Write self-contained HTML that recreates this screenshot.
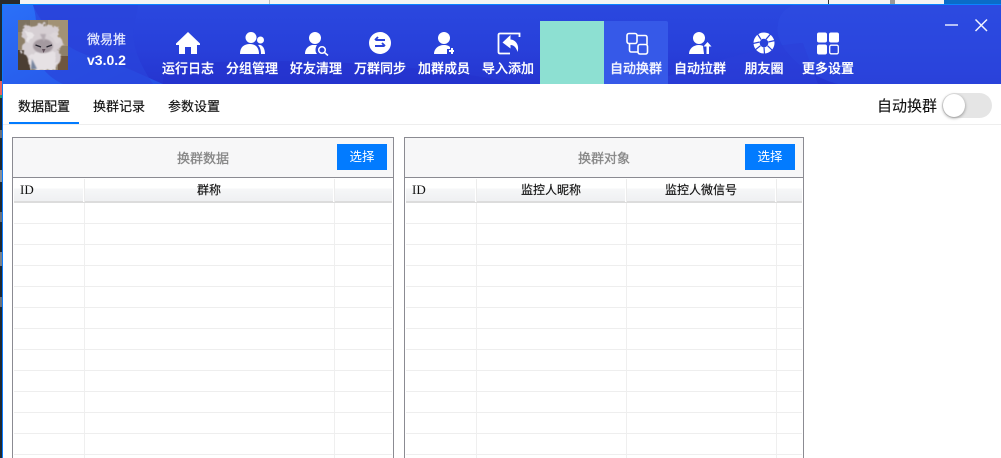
<!DOCTYPE html>
<html lang="zh">
<head>
<meta charset="utf-8">
<title>微易推</title>
<style>
*{box-sizing:border-box;margin:0;padding:0}
html,body{width:1001px;height:458px;overflow:hidden;background:#fff;font-family:"Liberation Sans","Noto Sans CJK SC",sans-serif;color:#111}
#root{position:relative;width:1001px;height:458px;overflow:hidden;background:#fff}
.abs{position:absolute}
#hdr{position:absolute;left:3px;top:5px;width:998px;height:79px;overflow:hidden;background:linear-gradient(180deg,#2a48df 0%,#2840da 55%,#2535d0 100%)}
#hdr svg.bg{position:absolute;left:0;top:0}
.nav{position:absolute;top:21px;width:64px;height:63px;color:#fff;text-align:center}
.nav svg{position:absolute;left:0;top:0}
.nav span{position:absolute;left:0;width:64px;top:39px;font-size:13px;line-height:18px;font-weight:500;white-space:nowrap;-webkit-text-stroke:.2px #fff}
.tab{position:absolute;top:97px;font-size:13px;line-height:20px;color:#111;white-space:nowrap;-webkit-text-stroke:.15px #111}
.panel{position:absolute;top:137px;height:321px;border:1px solid #8b8b92;border-bottom:0;background:#fff;overflow:hidden}
.phead{position:absolute;left:0;right:0;top:0;height:40px;background:#f7f7f8;border-bottom:1px solid #8b8b92}
.ptitle{position:absolute;top:11px;font-size:13px;line-height:20px;color:#888;text-align:center;-webkit-text-stroke:.35px #888}
.btn{position:absolute;top:6px;width:50px;height:26px;background:#027bff;color:#fff;font-size:12.5px;line-height:27px;text-align:center}
.thead{position:absolute;left:1px;top:41px;height:24px;background:linear-gradient(180deg,#fff 0,#fff 42%,#f6f7f8 44%,#eff0f2 100%);border-bottom:2px solid #dcdcdc}
.th{position:absolute;top:42px;height:20px;font-size:12px;line-height:20px;color:#111;text-align:center;white-space:nowrap;-webkit-text-stroke:.15px #111}
.id{font-family:"Liberation Serif",serif;font-size:13px;-webkit-text-stroke:0}
.sep{position:absolute;top:41px;width:2px;height:23px;background:#ececec;border-left:1px solid #fff}
.hl{position:absolute;height:1px;background:#eeeeee}
.vl{position:absolute;width:1px;top:65px;height:256px;background:#efefef}
</style>
</head>
<body>
<div id="root">
<!-- behind-window strip -->
<div class="abs" style="left:0;top:0;width:1001px;height:4px;background:#f3f3f3"></div>
<div class="abs" style="left:0;top:0;width:20px;height:4px;background:#2a2a2a"></div>
<div class="abs" style="left:269px;top:0;width:1px;height:4px;background:#bbb"></div>
<div class="abs" style="left:828px;top:0;width:1px;height:4px;background:#333"></div>
<div class="abs" style="left:890px;top:0;width:5px;height:4px;background:#999"></div>
<div class="abs" style="left:944px;top:0;width:57px;height:4px;background:#0a6cc8"></div>
<div class="abs" style="left:0;top:4px;width:2px;height:454px;background:#1f2a33"></div>
<div class="abs" style="left:0;top:81px;width:2px;height:14px;background:#e8605c"></div>
<div class="abs" style="left:0;top:95px;width:2px;height:3px;background:#2a9a6a"></div>
<div class="abs" style="left:0;top:130px;width:2px;height:8px;background:#6a7078"></div>
<div class="abs" style="left:0;top:170px;width:2px;height:12px;background:#8a8f95"></div>
<div class="abs" style="left:0;top:212px;width:2px;height:10px;background:#6a7078"></div>
<div class="abs" style="left:0;top:252px;width:2px;height:14px;background:#7a8087"></div>
<div class="abs" style="left:0;top:297px;width:2px;height:10px;background:#6a7078"></div>
<!-- window border -->
<div class="abs" style="left:2px;top:4px;width:999px;height:1px;background:#0a84ff"></div>
<div class="abs" style="left:2px;top:4px;width:1px;height:454px;background:#0a7bff"></div>

<div id="hdr">
<svg class="bg" width="998" height="79" viewBox="0 0 998 79">
<defs><linearGradient id="g1" x1="0" y1="0" x2="1" y2="1"><stop offset="0" stop-color="#2a70f8"/><stop offset="1" stop-color="#2650e4"/></linearGradient></defs>
<path d="M0 0H30C38 20 60 44 90 52C120 60 130 66 160 79H0Z" fill="url(#g1)"/>
<path d="M30 0H135C133 20 120 34 150 79H60C20 60 40 30 30 0Z" fill="#2944dc" opacity=".7"/>
<path d="M160 60C300 50 420 60 520 79H160Z" fill="#2431cc" opacity=".55"/>
<path d="M700 0H998V79H835C800 70 770 40 775 20C776 10 780 5 790 0Z" fill="#2e4ce2" opacity=".55"/>
<path d="M640 79C700 60 760 40 800 38L815 79Z" fill="#2c40d8" opacity=".6"/>
</svg>
</div>

<!-- avatar -->
<svg class="abs" style="left:18px;top:20px" width="50" height="50" viewBox="0 0 50 50">
<defs>
<filter id="fur" x="-15%" y="-15%" width="130%" height="130%"><feTurbulence type="fractalNoise" baseFrequency=".22" numOctaves="2" seed="4"/><feDisplacementMap in="SourceGraphic" scale="7" xChannelSelector="R" yChannelSelector="G"/><feGaussianBlur stdDeviation=".45"/></filter>
<filter id="b"><feGaussianBlur stdDeviation=".8"/></filter>
<clipPath id="c"><rect width="50" height="50"/></clipPath></defs>
<g clip-path="url(#c)">
<rect width="50" height="50" fill="#8e8069"/>
<rect x="30" width="20" height="26" fill="#a29275"/>
<rect y="0" width="12" height="12" fill="#7d7260"/>
<rect y="30" width="12" height="20" fill="#4b3e33"/>
<rect x="40" y="36" width="10" height="14" fill="#6e5640"/>
<g filter="url(#fur)">
<path d="M7 4L15 8L23 3L33 6L41 7L39 15L45 24L40 30L44 38L37 50H13L10 38L3 30L7 20L3 12Z" fill="#d6cfd3"/>
<path d="M12 34L38 32L38 50H14Z" fill="#e6e1e4"/>
<path d="M6 8L17 15L11 24Z" fill="#e9e5e7"/>
<path d="M40 10L32 15L41 24Z" fill="#dcd6d9"/>
</g>
<g filter="url(#b)">
<ellipse cx="25" cy="26" rx="10" ry="7" fill="#a49aa0"/>
<path d="M14 39L19 49H13Z" fill="#75839c"/>
<path d="M22 14L28 14L26 22Z" fill="#b5acb2"/>
</g>
<path d="M17.500 25L23 27M34 25L28.500 27" stroke="#26242e" stroke-width="1.300"/>
<path d="M24 29L25.500 33L27.500 29Z" fill="#5f4f5a"/>
</g>
</svg>
<div class="abs" style="left:87px;top:31px;font-size:13px;line-height:18px;color:#e8ecff;white-space:nowrap;-webkit-text-stroke:.2px #e8ecff">微易推</div>
<div class="abs" style="left:87px;top:51px;font-size:14px;line-height:18px;color:#fff;font-weight:bold;white-space:nowrap">v3.0.2</div>

<!-- nav -->
<div class="nav" style="left:156px"><svg width="64" height="40"><path d="M32 11L20 22.500V24H23V33H29V26H35V33H41V24H44V22.500Z" fill="#fff"/></svg><span>运行日志</span></div>
<div class="nav" style="left:220px"><svg width="64" height="40"><circle cx="31" cy="16.500" r="5.500" fill="#fff"/><path d="M20 33C20 26 24 23 30 23C36 23 39 27 39 33Z" fill="#fff"/><circle cx="40.500" cy="19" r="3.500" fill="#fff"/><path d="M38 24C42 23 45 27 45 33H41C41 29 40 26 38 24Z" fill="#fff"/></svg><span>分组管理</span></div>
<div class="nav" style="left:284px"><svg width="64" height="40"><circle cx="31" cy="17" r="6" fill="#fff"/><path d="M21 33C21 28 24 25 28 24L33 24C31 27 31 31 33 33Z" fill="#fff"/><circle cx="38" cy="29" r="3.300" fill="none" stroke="#fff" stroke-width="1.500"/><path d="M40.500 31.500L44 34.500" stroke="#fff" stroke-width="1.500"/></svg><span>好友清理</span></div>
<div class="nav" style="left:348px"><svg width="64" height="40"><circle cx="32" cy="22" r="11" fill="#fff"/><path d="M37 19H27.500M30 16L27 19M27 25H36.500M34 22L37 25" stroke="#2a42da" stroke-width="1.900" fill="none"/></svg><span>万群同步</span></div>
<div class="nav" style="left:412px"><svg width="64" height="40"><circle cx="32" cy="17" r="6" fill="#fff"/><path d="M22 33C22 28 26 24 32 24C35 24 37 25 38 26V28H35V33Z" fill="#fff"/><path d="M40 27V33M37 30H42" stroke="#fff" stroke-width="2"/></svg><span>加群成员</span></div>
<div class="nav" style="left:476px"><svg width="64" height="40"><path d="M43.500 16V12.500H24C23 12.500 22.500 13 22.500 14V31C22.500 32 23 32.500 24 32.500H34" fill="none" stroke="#fff" stroke-width="1.800"/><path d="M34.500 14L26.500 21.500L34.500 27.500V24C38 24 40.500 27 41.500 31C43.500 25 40.500 19 34.500 18.500Z" fill="#fff"/></svg><span>导入添加</span></div>
<div class="abs" style="left:540px;top:21px;width:64px;height:63px;background:#8de0d2"></div>
<div class="nav" style="left:604px;background:#3659e8;border-top-right-radius:2px"><svg width="64" height="40" fill="none" stroke="#fff" stroke-width="1.600"><rect x="23" y="12.500" width="10" height="10" rx="2"/><rect x="34" y="23.500" width="9.500" height="9.500" rx="2"/><path d="M33 14.500H41C42.500 14.500 43 15 43 16.500V23.500M25.500 22.500V29C25.500 30.500 26 31 27.500 31H34"/></svg><span style="color:#f0f2ff">自动换群</span></div>
<div class="nav" style="left:668px"><svg width="64" height="40"><circle cx="31" cy="17" r="6" fill="#fff"/><path d="M21 33C21 28 25 24 31 24C33 24 34.500 24.500 35 25L36 33Z" fill="#fff"/><path d="M38.500 33V25.500H35.500L39.500 21L43.500 25.500H41V33Z" fill="#fff"/></svg><span>自动拉群</span></div>
<div class="nav" style="left:732px"><svg width="64" height="40"><circle cx="32" cy="22" r="10.500" fill="#fff"/><circle cx="32" cy="22" r="4.300" fill="#2a42da"/><g stroke="#2a42da" stroke-width="1.200"><path d="M34 18.300L39 12.500"/><path d="M36.300 21L43 19.500"/><path d="M35.500 24.700L40.500 29.500"/><path d="M32 26.300L32.500 33"/><path d="M28.500 24.700L23 29"/><path d="M27.700 21L21 22.500"/><path d="M29 18.500L25.500 13"/></g></svg><span>朋友圈</span></div>
<div class="nav" style="left:796px"><svg width="64" height="40"><rect x="21" y="11.500" width="10" height="10" rx="2" fill="#fff"/><rect x="33" y="11.500" width="10" height="10" rx="2" fill="#fff"/><rect x="21" y="23.500" width="10" height="10" rx="2" fill="#fff"/><rect x="33.700" y="24.200" width="8.600" height="8.600" rx="1.500" fill="none" stroke="#fff" stroke-width="1.300"/></svg><span>更多设置</span></div>

<!-- window controls -->
<svg class="abs" style="left:940px;top:14px" width="55" height="22"><path d="M5 11H18" stroke="#f2f4ff" stroke-width="1.400"/><path d="M35.500 5.500L47 17M47 5.500L35.500 17" stroke="#f2f4ff" stroke-width="1.500"/></svg>

<!-- tabs -->
<div class="tab" style="left:18px">数据配置</div>
<div class="tab" style="left:93px">换群记录</div>
<div class="tab" style="left:168px">参数设置</div>
<div class="abs" style="left:3px;top:124px;width:998px;height:1px;background:#eeeeee"></div>
<div class="abs" style="left:9px;top:122px;width:70px;height:2px;background:#027bff"></div>
<div class="abs" style="left:877px;top:97px;font-size:15px;line-height:20px;color:#111;white-space:nowrap;-webkit-text-stroke:.1px #111">自动换群</div>
<div class="abs" style="left:942px;top:93px;width:50px;height:25px;border-radius:13px;background:#e5e5e5"></div>
<div class="abs" style="left:943px;top:94px;width:22px;height:23px;border-radius:50%;background:#fff;box-shadow:0 1px 3px rgba(0,0,0,.4)"></div>

<!-- left panel -->
<div class="panel" style="left:12px;width:382px">
  <div class="phead"></div>
  <div class="ptitle" style="left:0;width:380px">换群数据</div>
  <div class="btn" style="left:324px">选择</div>
  <div class="thead" style="width:378px"></div>
  <div class="th id" style="left:7px">ID</div>
  <div class="th" style="left:71px;width:250px">群称</div>
  <div class="sep" style="left:70px"></div>
  <div class="sep" style="left:320px"></div>
  <div class="vl" style="left:71px"></div>
  <div class="vl" style="left:321px"></div>
  <div class="hl" style="left:1px;width:378px;top:85px"></div>
  <div class="hl" style="left:1px;width:378px;top:106px"></div>
  <div class="hl" style="left:1px;width:378px;top:127px"></div>
  <div class="hl" style="left:1px;width:378px;top:148px"></div>
  <div class="hl" style="left:1px;width:378px;top:169px"></div>
  <div class="hl" style="left:1px;width:378px;top:190px"></div>
  <div class="hl" style="left:1px;width:378px;top:211px"></div>
  <div class="hl" style="left:1px;width:378px;top:232px"></div>
  <div class="hl" style="left:1px;width:378px;top:253px"></div>
  <div class="hl" style="left:1px;width:378px;top:274px"></div>
  <div class="hl" style="left:1px;width:378px;top:295px"></div>
  <div class="hl" style="left:1px;width:378px;top:316px"></div>
</div>

<!-- right panel -->
<div class="panel" style="left:404px;width:400px">
  <div class="phead"></div>
  <div class="ptitle" style="left:0;width:398px">换群对象</div>
  <div class="btn" style="left:340px">选择</div>
  <div class="thead" style="width:396px"></div>
  <div class="th id" style="left:7px">ID</div>
  <div class="th" style="left:71px;width:150px">监控人昵称</div>
  <div class="th" style="left:221px;width:150px">监控人微信号</div>
  <div class="sep" style="left:70px"></div>
  <div class="sep" style="left:220px"></div>
  <div class="sep" style="left:370px"></div>
  <div class="vl" style="left:71px"></div>
  <div class="vl" style="left:221px"></div>
  <div class="vl" style="left:371px"></div>
  <div class="hl" style="left:1px;width:396px;top:85px"></div>
  <div class="hl" style="left:1px;width:396px;top:106px"></div>
  <div class="hl" style="left:1px;width:396px;top:127px"></div>
  <div class="hl" style="left:1px;width:396px;top:148px"></div>
  <div class="hl" style="left:1px;width:396px;top:169px"></div>
  <div class="hl" style="left:1px;width:396px;top:190px"></div>
  <div class="hl" style="left:1px;width:396px;top:211px"></div>
  <div class="hl" style="left:1px;width:396px;top:232px"></div>
  <div class="hl" style="left:1px;width:396px;top:253px"></div>
  <div class="hl" style="left:1px;width:396px;top:274px"></div>
  <div class="hl" style="left:1px;width:396px;top:295px"></div>
  <div class="hl" style="left:1px;width:396px;top:316px"></div>
</div>
</div>
</body>
</html>
